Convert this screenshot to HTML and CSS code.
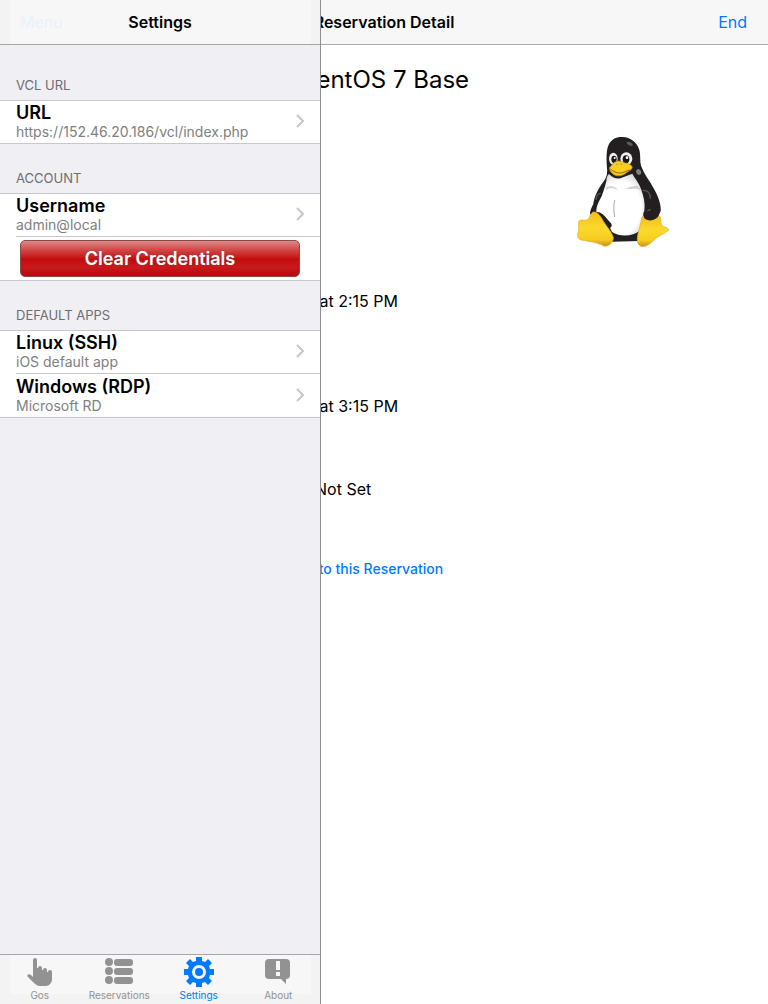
FILE: index.html
```
<!DOCTYPE html>
<html lang="en">
<head>
    <meta charset="UTF-8">
    <meta name="viewport" content="width=device-width, initial-scale=1.0">
    <title>Settings</title>
    <link rel="stylesheet" href="styles.css">
</head>
<body>

<!-- Reservation detail -->
<main class="detail">
    <header class="navbar detail-navbar">
        <h1 class="navbar-title">Reservation Detail</h1>
        <button type="button" class="end-button">End</button>
    </header>
    <div class="detail-body">
        <h2 class="image-name">CentOS 7 Base</h2>
        <svg class="os-logo" viewBox="21 21 276 330" role="img" aria-label="Linux">
            <defs>
                <linearGradient id="foot" x1="0" y1="0" x2="0" y2="1">
                    <stop offset="0" stop-color="#f2bd1c"/>
                    <stop offset="0.45" stop-color="#fbd92c"/>
                    <stop offset="0.8" stop-color="#f6cd20"/>
                    <stop offset="1" stop-color="#c98f1b"/>
                </linearGradient>
                <radialGradient id="belly" cx="0.5" cy="0.55" r="0.6">
                    <stop offset="0.7" stop-color="#ffffff"/>
                    <stop offset="1" stop-color="#d4d4d4"/>
                </radialGradient>
            </defs>
            <path fill="#231f20" d="M154 21C178 20 201 35 208 60C213 78 208 95 215 112C223 134 238 151 250 173C264 197 274 223 272 243C265 265 244 273 222 272L206 333L127 335L60 252C60 242 64 234 70 222C72 202 82 180 98 158C109 145 113 133 111 115C109 91 108 61 116 44C124 28 138 21 154 21Z"/>
            <path fill="url(#belly)" d="M117 132C130 145 144 150 159 142C171 137 180 134 187 131C194 145 207 158 213 177C221 199 226 220 223 242C219 248 220 259 216 275L207 303C190 319 151 322 126 306L120 293C127 286 122 278 112 271L79 246C78 230 86 216 95 199C100 184 106 168 109 153C110 144 111 137 117 132Z"/>
            <path fill="#d0d0d0" d="M108 171C123 166 136 169 145 180C131 173 119 174 108 179ZM161 175C177 174 188 166 199 167C207 168 211 174 214 182C201 172 185 180 161 175Z"/>
            <path fill="none" stroke="#aaa" stroke-width="3" stroke-linecap="round" d="M134 211C130 225 131 246 134 260"/>
            <path fill="none" stroke="#55585a" stroke-width="4" stroke-linecap="round" d="M78 208C79 198 84 191 91 190M220 181C235 181 241 192 241 205M228 246L240 239"/>
            <ellipse cx="179" cy="41" rx="10" ry="5" fill="#59595c" transform="rotate(28 179 41)"/>
            <ellipse cx="206" cy="126" rx="7" ry="9" fill="#808184" transform="rotate(-30 206 126)"/>
            <ellipse cx="130" cy="86" rx="13" ry="18" fill="#f0f0f0"/>
            <ellipse cx="169" cy="86" rx="18" ry="19" fill="#f0f0f0"/>
            <ellipse cx="132" cy="88" rx="8" ry="11" fill="#171717"/>
            <ellipse cx="168" cy="88" rx="10" ry="12" fill="#171717"/>
            <circle cx="134" cy="84" r="3" fill="#fff"/>
            <circle cx="171" cy="83" r="4" fill="#fff"/>
            <path fill="#f8cb21" stroke="#c68918" stroke-width="2" d="M118 113C124 110 127 99 137 95C149 89 156 97 166 99C176 101 185 104 187 112C185 121 175 124 168 129C158 137 144 141 132 134C126 130 119 124 118 113Z"/>
            <path fill="none" stroke="#8c651c" stroke-width="3" stroke-linecap="round" d="M122 118C130 124 139 130 151 129C162 128 170 122 180 120"/>
            <path fill="#9c721d" d="M138 102l5-1-2 4zM151 101l6 1-4 3z"/>
            <path fill="#231f20" d="M79 246C94 243 107 261 123 280C129 289 122 298 111 291Z"/>
            <path fill="url(#foot)" stroke="#e0b01f" stroke-width="2" stroke-linejoin="round" d="M26 274C31 267 44 273 52 269C61 263 61 249 70 246C83 244 92 259 101 275C111 291 125 306 130 322C130 339 116 351 101 348C86 338 61 335 35 330C17 327 24 310 26 299Z"/>
            <path fill="url(#foot)" stroke="#e0b01f" stroke-width="2" stroke-linejoin="round" d="M220 257C226 269 242 271 257 263L267 257C276 261 270 279 275 285C281 293 293 291 297 299C291 307 273 313 258 325C245 336 234 350 217 350C200 347 201 331 203 316C207 297 213 278 216 262Z"/>
            <path fill="#231f20" d="M222 247C236 239 258 244 267 256C257 274 233 276 222 263Z"/>
        </svg>
        <p class="detail-text start-time"> at 2:15 PM</p>
        <p class="detail-text end-time"> at 3:15 PM</p>
        <p class="detail-text access">Not Set</p>
        <a href="#" class="detail-text connect-link"> to this Reservation</a>
    </div>
</main>

<!-- Slide-over settings panel -->
<aside class="panel">
    <header class="navbar panel-navbar">
        <span class="menu-label">Menu</span>
        <h1 class="navbar-title">Settings</h1>
    </header>

    <div class="settings">
        <h2 class="group-title">VCL URL</h2>
        <div class="group">
            <a href="#" class="cell">
                <span class="cell-text">
                    <span class="cell-title">URL</span>
                    <span class="cell-value">https://152.46.20.186/vcl/index.php</span>
                </span>
                <svg class="chevron" viewBox="0 0 8 14"><path d="M1 1l6 6-6 6"/></svg>
            </a>
        </div>

        <h2 class="group-title">ACCOUNT</h2>
        <div class="group">
            <a href="#" class="cell">
                <span class="cell-text">
                    <span class="cell-title">Username</span>
                    <span class="cell-value">admin@local</span>
                </span>
                <svg class="chevron" viewBox="0 0 8 14"><path d="M1 1l6 6-6 6"/></svg>
            </a>
            <div class="button-cell">
                <button type="button" class="clear-button">Clear Credentials</button>
            </div>
        </div>

        <h2 class="group-title">DEFAULT APPS</h2>
        <div class="group">
            <a href="#" class="cell">
                <span class="cell-text">
                    <span class="cell-title">Linux (SSH)</span>
                    <span class="cell-value">iOS default app</span>
                </span>
                <svg class="chevron" viewBox="0 0 8 14"><path d="M1 1l6 6-6 6"/></svg>
            </a>
            <a href="#" class="cell">
                <span class="cell-text">
                    <span class="cell-title">Windows (RDP)</span>
                    <span class="cell-value">Microsoft RD</span>
                </span>
                <svg class="chevron" viewBox="0 0 8 14"><path d="M1 1l6 6-6 6"/></svg>
            </a>
        </div>
    </div>

    <nav class="tabbar">
        <a href="#" class="tab">
            <svg class="tab-icon" viewBox="0 0 30 30">
                <path d="M8 3a2 2 0 0 1 4 0v8h1a2 2 0 0 1 4 0v2h1a2 2 0 0 1 4 0v2h1a2 2 0 0 1 4 0v7c0 4-3 7-6 7h-6c-3 0-5-2-7-4L3 20c-2-2 1-4 3-2l2 2z"/>
            </svg>
            <span>Gos</span>
        </a>
        <a href="#" class="tab">
            <svg class="tab-icon" viewBox="0 0 30 30">
                <circle cx="5" cy="5" r="4"/><rect x="10" y="2" width="19" height="7" rx="3"/>
                <circle cx="5" cy="14" r="4"/><rect x="10" y="11" width="19" height="7" rx="3"/>
                <circle cx="5" cy="23" r="4"/><rect x="10" y="20" width="19" height="7" rx="3"/>
            </svg>
            <span>Reservations</span>
        </a>
        <a href="#" class="tab active">
            <svg class="tab-icon" viewBox="0 0 30 30">
                <path fill-rule="evenodd" d="M12 0h6v4l3 1 3-3 4 4-3 3 1 3h4v6h-4l-1 3 3 3-4 4-3-3-3 1v4h-6v-4l-3-1-3 3-4-4 3-3-1-3H0v-6h4l1-3-3-3 4-4 3 3 3-1zM15 8a7 7 0 1 0 0 14 7 7 0 0 0 0-14z"/>
                <circle cx="15" cy="15" r="4"/>
            </svg>
            <span>Settings</span>
        </a>
        <a href="#" class="tab">
            <svg class="tab-icon" viewBox="0 0 30 30">
                <path fill-rule="evenodd" d="M6 2h17a4 4 0 0 1 4 4v12a4 4 0 0 1-4 4v5l-5-5H6a4 4 0 0 1-4-4V6a4 4 0 0 1 4-4zM13 4v9h4V4zM13 15v4h4v-4z"/>
            </svg>
            <span>About</span>
        </a>
    </nav>
</aside>

</body>
</html>
```
FILE: styles.css
```
* {
    box-sizing: border-box;
}
body {
    margin: 0;
    font-family: Inter, "Liberation Sans", sans-serif;
    background-color: #fff;
    color: #000;
}
h1, h2, p {
    margin: 0;
    font-weight: normal;
}
a {
    text-decoration: none;
}
button {
    font-family: inherit;
    cursor: pointer;
}

/* Navigation bars */
.navbar {
    display: grid;
    grid-template-columns: 1fr auto 1fr;
    align-items: center;
    height: 45px;
    border-bottom: 1px solid #a7a7aa;
    background-color: #f7f7f7;
}
.navbar-title {
    grid-column: 2;
    font-size: 16px;
    font-weight: 600;
    line-height: 20px;
}

/* Detail page */
.detail {
    min-height: 100vh;
}
.end-button {
    justify-self: end;
    margin-right: 21px;
    padding: 0;
    border: none;
    background: none;
    color: #007aff;
    font-size: 16px;
    line-height: 20px;
}
.detail-body {
    display: flex;
    flex-direction: column;
    padding-top: 19px;
}
.image-name {
    text-align: center;
    font-size: 24px;
    line-height: 32px;
}
.os-logo {
    align-self: flex-end;
    width: 92px;
    height: 110px;
    margin: 41px 99px 0 0;
}
.detail-text {
    padding-left: 315px;
    font-size: 16px;
    line-height: 20px;
    white-space: pre;
}
.start-time {
    margin-top: 44px;
}
.end-time {
    margin-top: 85px;
}
.access {
    margin-top: 63px;
}
.connect-link {
    margin-top: 60px;
    color: #007aff;
    font-size: 14px;
    font-weight: 500;
}

/* Settings panel over the detail page */
.panel {
    position: fixed;
    top: 0;
    bottom: 0;
    left: 0;
    display: flex;
    flex-direction: column;
    width: 321px;
    border-right: 1px solid #8e8e92;
    background-color: #efeff4;
}
.panel-navbar {
    background: linear-gradient(#f7f7f7, #f7f7f7) 10px 0 / 301px 100% no-repeat #f3f3f3;
}
.menu-label {
    padding-left: 20px;
    color: #eaf2fa;
    font-size: 16px;
    line-height: 20px;
}
.settings {
    flex: 1;
    padding-top: 6px;
}
.group-title {
    padding: 26px 16px 7px;
    color: #6d6d72;
    font-size: 13px;
    line-height: 16px;
}
.group {
    border-top: 1px solid #c8c7cc;
    border-bottom: 1px solid #c8c7cc;
    background-color: #fff;
}
.cell {
    display: flex;
    align-items: center;
    justify-content: space-between;
    height: 42px;
    margin-left: 16px;
    padding: 0 16px 2px 0;
    color: #000;
}
.cell + .cell,
.button-cell {
    height: 44px;
    border-top: 1px solid #c8c7cc;
}
.cell-text {
    display: flex;
    flex-direction: column;
}
.cell-title {
    font-size: 18px;
    font-weight: 600;
    line-height: 22px;
}
.cell-value {
    color: #808080;
    font-size: 14px;
    line-height: 16px;
}
.chevron {
    width: 8px;
    height: 14px;
    fill: none;
    stroke: #c7c7cc;
    stroke-width: 2;
}
.button-cell {
    margin-left: 16px;
    padding: 3px 20px 3px 4px;
}
.clear-button {
    display: block;
    width: 100%;
    height: 37px;
    border: 1px solid #8a4a4a;
    border-radius: 5px;
    background: linear-gradient(#e08a8a 0%, #d14040 28%, #c81e1e 45%, #c50a0c 52%, #c81a1c 75%, #b80a0c 100%);
    color: #fff;
    font-size: 18px;
    font-weight: 600;
    line-height: 22px;
    text-shadow: 0 0 1px #666;
}

/* Tab bar */
.tabbar {
    display: flex;
    height: 50px;
    padding-right: 2px;
    border-top: 1px solid #a7a7aa;
    background: linear-gradient(#f7f7f7, #f7f7f7) 10px 0 / 301px 39px no-repeat #f3f3f3;
}
.tab {
    display: flex;
    flex: 1;
    flex-direction: column;
    align-items: center;
    padding-top: 2px;
    color: #929292;
    font-size: 10px;
    line-height: 12px;
}
.tab-icon {
    width: 30px;
    height: 30px;
    margin-bottom: 2px;
    fill: currentColor;
}
.tab.active {
    color: #007aff;
}
```
